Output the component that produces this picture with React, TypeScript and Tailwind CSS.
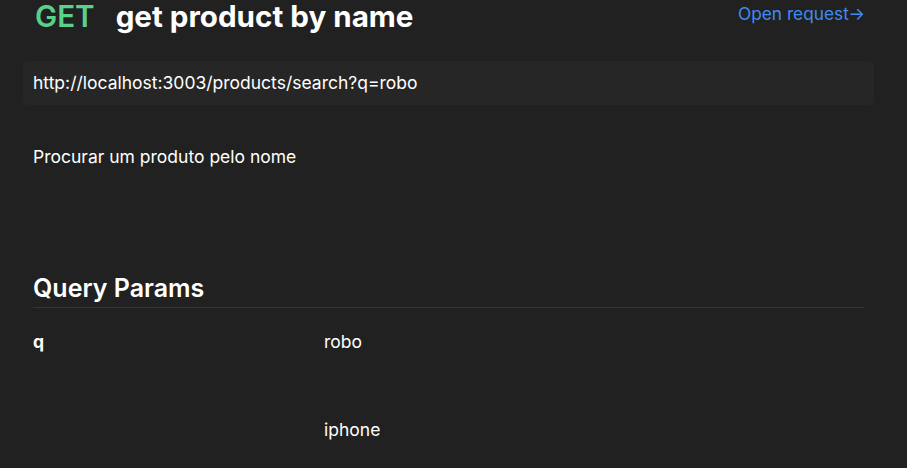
import React from "react";

const params = [
  { name: "q", value: "robo" },
  { name: "", value: "iphone" },
];

export default function App() {
  return (
    <div
      className="w-[907px] h-[468px] overflow-hidden bg-[#212121] text-white"
      style={{ fontFamily: "Inter, 'Noto Sans', sans-serif" }}
    >
      <div className="pl-[33px] pr-[43px]">
        {/* Header */}
        <div className="flex items-start justify-between h-[61px]">
          <h1 className="flex items-baseline gap-[21px] ml-[2px] text-[29.6px] leading-[32px]">
            <span className="font-semibold text-[#5ad08a]">GET</span>
            <span className="font-bold">get product by name</span>
          </h1>
          <a className="mt-[2px] mr-[-1px] text-[17.3px] leading-[24px] text-[#3f8cf3]" href="#">
            Open request→
          </a>
        </div>

        {/* URL */}
        <div className="-mx-[10px] h-[44px] flex items-center px-[10px] rounded-[5px] bg-[#262626] text-[17.5px]">
          http://localhost:3003/products/search?q=robo
        </div>

        <p className="mt-[41px] text-[17.5px] leading-[22px]">Procurar um produto pelo nome</p>

        {/* Query Params */}
        <h2 className="mt-[104px] text-[25px] leading-[32px] font-semibold pb-[3px] border-b border-[#333333]">
          Query Params
        </h2>
        <div className="mt-[23px] flex flex-col gap-[66px]">
          {params.map((p, i) => (
            <div key={i} className="flex text-[17.5px] leading-[22px]">
              <div className="w-[291px] font-bold">{p.name}</div>
              <div>{p.value}</div>
            </div>
          ))}
        </div>
      </div>
    </div>
  );
}
